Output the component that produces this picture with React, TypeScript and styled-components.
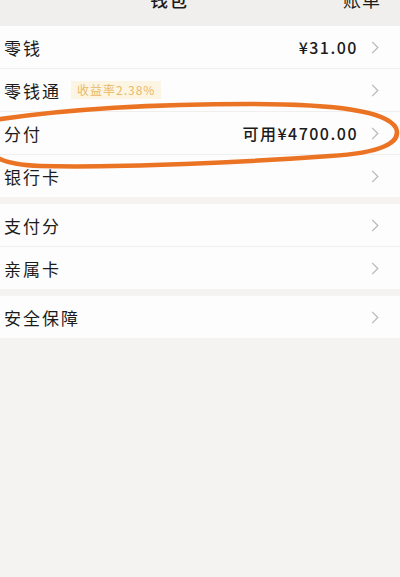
import styled, { createGlobalStyle } from "styled-components";

const GlobalStyle = createGlobalStyle`
  body {
    margin: 0;
    background: #f4f3f2;
    font-family: "Noto Sans CJK SC", "Noto Sans", sans-serif;
    color: #1b1b1b;
  }
`;

type Item = { label: string; value?: string; badge?: string };

const groups: Item[][] = [
    [
        { label: "零钱", value: "¥31.00" },
        { label: "零钱通", badge: "收益率2.38%" },
        { label: "分付", value: "可用¥4700.00" },
        { label: "银行卡" },
    ],
    [{ label: "支付分" }, { label: "亲属卡" }],
    [{ label: "安全保障" }],
];

export default function App() {
    return (
        <Page>
            <GlobalStyle />
            <Header>
                <Title>钱包</Title>
                <HeaderLink>账单</HeaderLink>
            </Header>
            {groups.map((group, gi) => (
                <Group key={gi}>
                    {group.map((item) => (
                        <Row key={item.label}>
                            <Label>{item.label}</Label>
                            {item.badge && <Badge>{item.badge}</Badge>}
                            <Value>{item.value}</Value>
                            <Chevron viewBox="0 0 10 16">
                                <path d="M2 2 L8 8 L2 14" />
                            </Chevron>
                        </Row>
                    ))}
                </Group>
            ))}
            {/* hand-drawn circle around 分付 */}
            <Scribble viewBox="0 0 400 577">
                <path d="M-6 120 C 60 110, 150 104, 250 104 C 330 104, 386 110, 396 128 C 402 143, 380 153, 330 156 C 250 162, 120 168, 40 166 C 14 165, 0 161, -6 155" />
            </Scribble>
        </Page>
    );
}

const Page = styled.div`
    position: relative;
    min-height: 577px;
    overflow: hidden;
`;

const Header = styled.div`
    height: 26px;
    background: #f0efee;
    display: flex;
    justify-content: center;
    padding-right: 62px;
    position: relative;
`;

const Title = styled.div`
    font-size: 18px;
    line-height: 18px;
    margin-top: -10px;
    font-weight: 500;
    letter-spacing: 1px;
`;

const HeaderLink = styled(Title)`
    position: absolute;
    right: 19px;
    top: 0;
    font-weight: 400;
`;

const Group = styled.div`
    background: #fdfdfd;
    margin-bottom: 7px;
`;

const Row = styled.div`
    height: 42px;
    display: flex;
    align-items: center;
    padding: 0 20px 0 4px;
    border-bottom: 1px solid #f0efee;
    &:last-child {
        border-bottom: none;
    }
`;

const Label = styled.div`
    font-size: 17px;
    letter-spacing: 2px;
`;

const Badge = styled.div`
    margin-left: 10px;
    background: #fdf5e4;
    color: #e9b866;
    font-size: 12px;
    padding: 1px 6px;
    line-height: 16px;
    letter-spacing: 1px;
`;

const Value = styled.div`
    margin-left: auto;
    font-size: 16px;
    font-weight: 500;
    letter-spacing: 1.5px;
    color: #1b1b1b;
`;

const Chevron = styled.svg`
    width: 10px;
    height: 15px;
    margin-left: 12px;
    fill: none;
    stroke: #b8b8b8;
    stroke-width: 1.3;
`;

const Scribble = styled.svg`
    position: absolute;
    left: 0;
    top: 0;
    width: 400px;
    height: 577px;
    pointer-events: none;
    fill: none;
    stroke: #ea7424;
    stroke-width: 4.5;
    stroke-linecap: round;
`;
